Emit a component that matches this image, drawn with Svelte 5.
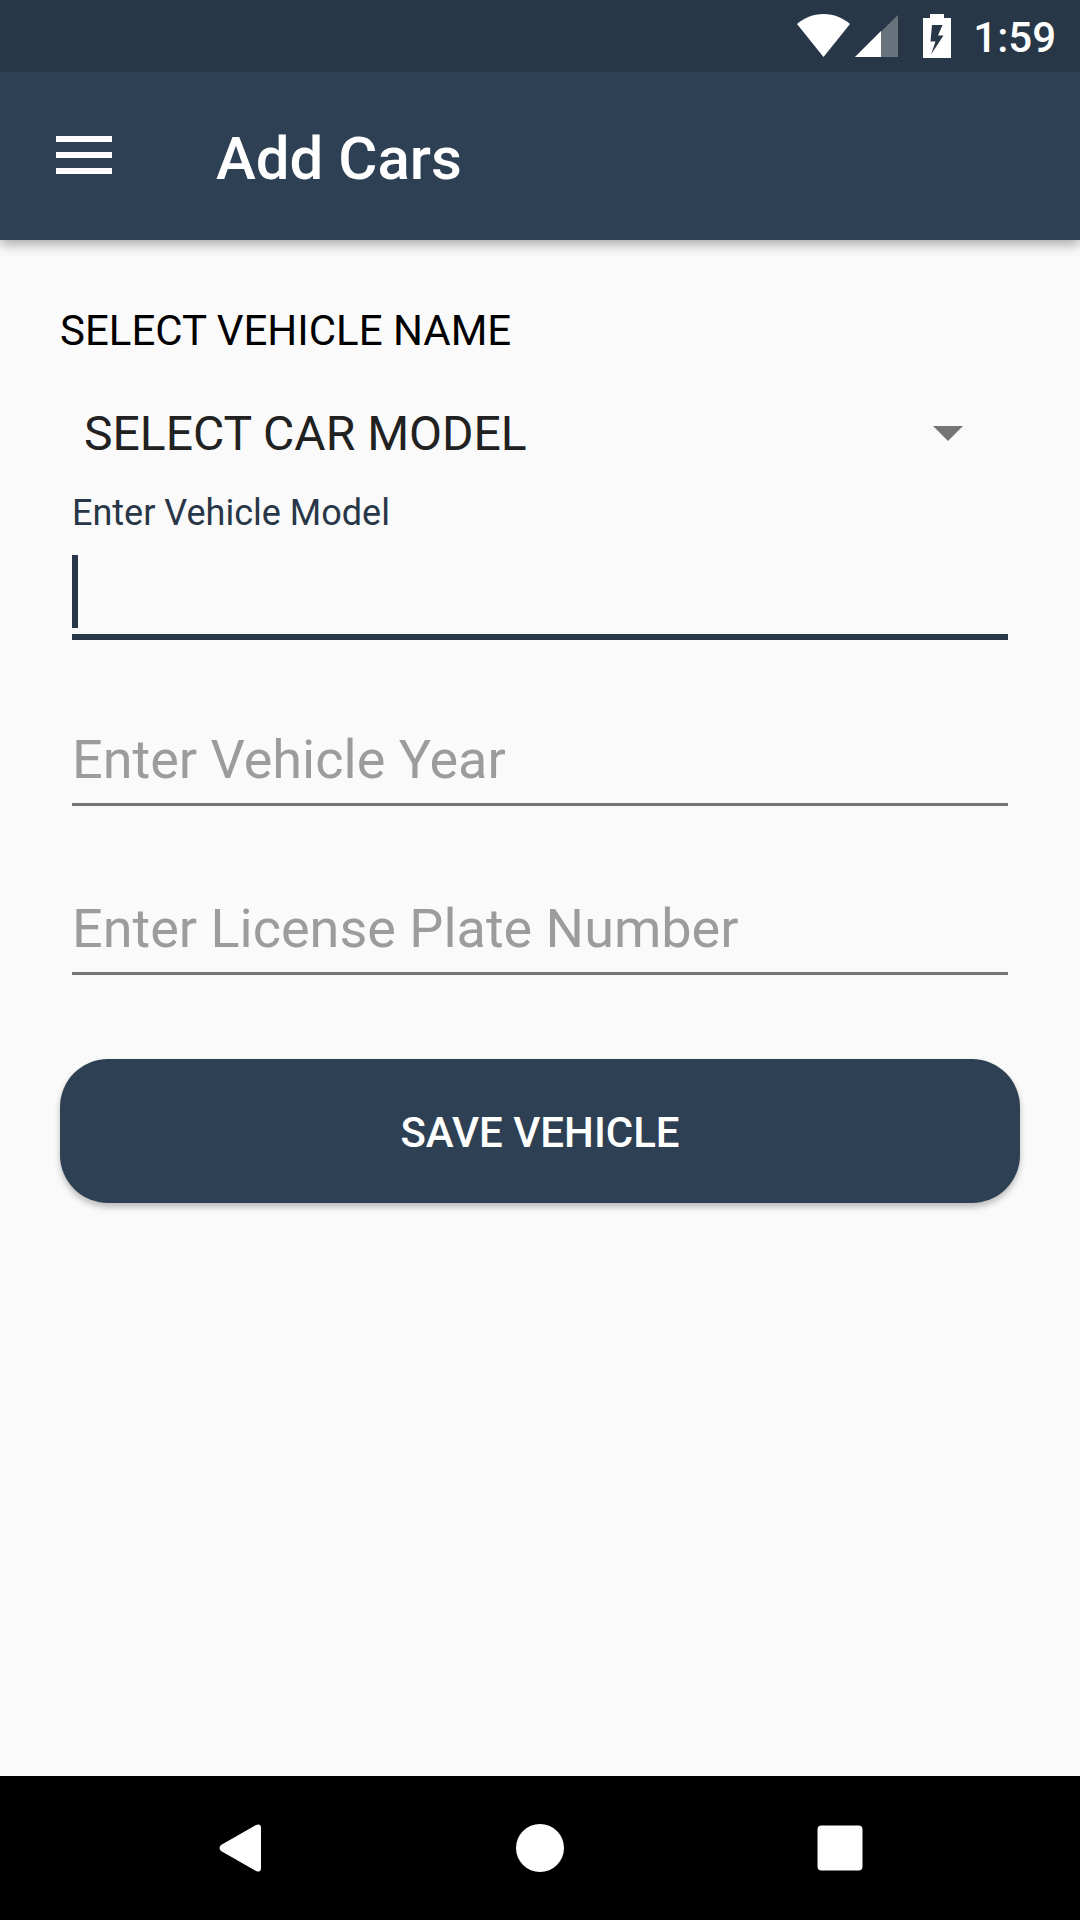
<script lang="ts">
  interface Field {
    id: string;
    label: string;
    value: string;
  }

  let carModel = $state('');
  let active = $state('vehicle-model');
  let fields: Field[] = $state([
    { id: 'vehicle-model', label: 'Enter Vehicle Model', value: '' },
    { id: 'vehicle-year', label: 'Enter Vehicle Year', value: '' },
    { id: 'license-plate', label: 'Enter License Plate Number', value: '' },
  ]);

  function handleSubmit(event: SubmitEvent) {
    event.preventDefault();
  }
</script>

<div class="screen">
  <div class="status-bar">
    <svg class="wifi" width="54" height="44" viewBox="0 0 54 44" aria-hidden="true">
      <path d="M0 10C7 4 16 0 26.500 0S46 4 53 10L26.500 43z" fill="#fff" />
    </svg>
    <svg class="signal" width="44" height="44" viewBox="0 0 44 44" aria-hidden="true">
      <path d="M43 1v42H0z" fill="#fff" fill-opacity="0.3" />
      <path d="M26 17v26H0z" fill="#fff" />
    </svg>
    <svg class="battery" width="28" height="44" viewBox="0 0 28 44" aria-hidden="true">
      <path
        fill="#fff"
        fill-rule="evenodd"
        d="M7 0h14v4h7v40H0V4h7zM9 11L7.500 27.500h5L8 40.500L20.500 21.500H15L19.500 11z"
      />
    </svg>
    <span class="time">1:59</span>
  </div>

  <header class="toolbar">
    <button type="button" class="menu-button" aria-label="Menu">
      <svg width="56" height="40" viewBox="0 0 56 40" fill="#fff" aria-hidden="true">
        <path d="M0 0h56v6H0zM0 16h56v6H0zM0 32h56v6H0z" />
      </svg>
    </button>
    <h1>Add Cars</h1>
  </header>

  <main>
    <form onsubmit={handleSubmit}>
      <label class="select-label" for="car-model">SELECT VEHICLE NAME</label>
      <div class="spinner">
        <select id="car-model" bind:value={carModel}>
          <option value="">SELECT CAR MODEL</option>
        </select>
        <svg width="30" height="15" viewBox="0 0 30 15" aria-hidden="true">
          <path d="M0 0h30L15 15z" fill="#757575" />
        </svg>
      </div>

      <div class="fields">
        {#each fields as field (field.id)}
          <div
            class="field"
            class:active={active === field.id}
            class:floating={active === field.id || field.value !== ''}
          >
            <input
              id={field.id}
              type="text"
              autocomplete="off"
              bind:value={field.value}
              onfocus={() => (active = field.id)}
            />
            <label for={field.id}>{field.label}</label>
            {#if active === field.id && field.value === ''}
              <span class="cursor"></span>
            {/if}
          </div>
        {/each}
      </div>

      <button type="submit" class="save-button">SAVE VEHICLE</button>
    </form>
  </main>

  <nav class="system-nav">
    <button type="button" aria-label="Back">
      <svg width="48" height="48" viewBox="0 0 48 48" fill="#fff" aria-hidden="true">
        <path d="M5 21L40 1Q45 -1 45 4V44Q45 49 40 47L5 27Q2 24 5 21z" />
      </svg>
    </button>
    <button type="button" aria-label="Home">
      <svg width="48" height="48" viewBox="0 0 48 48" fill="#fff" aria-hidden="true">
        <circle cx="24" cy="24" r="24" />
      </svg>
    </button>
    <button type="button" aria-label="Recent apps">
      <svg width="48" height="48" viewBox="0 0 48 48" fill="#fff" aria-hidden="true">
        <rect x="1.5" y="1.5" width="45" height="45" rx="4" />
      </svg>
    </button>
  </nav>
</div>

<style>
  :global(body) {
    background: #fafafa;
  }

  .screen {
    display: flex;
    flex-direction: column;
    min-height: 100vh;
    font-family: Roboto, sans-serif;
    color: #000;
  }

  svg {
    display: block;
  }

  button {
    border: 0;
    padding: 0;
    background: none;
    font: inherit;
    color: #fff;
    cursor: pointer;
  }

  .status-bar {
    position: relative;
    z-index: 1;
    display: flex;
    align-items: center;
    justify-content: flex-end;
    height: 72px;
    padding-right: 24px;
    background: #283747;
    color: #fff;
  }

  .signal {
    margin-left: 4px;
  }

  .battery {
    margin: 0 22px 0 24px;
  }

  .time {
    font-size: 42px;
    font-weight: 500;
    line-height: 48px;
    padding-top: 4px;
  }

  .toolbar {
    display: flex;
    align-items: center;
    gap: 104px;
    height: 168px;
    padding: 0 56px;
    background: #2e4053;
    color: #fff;
    box-shadow: 0 4px 12px rgba(0, 0, 0, 0.35);
  }

  h1 {
    margin: 0;
    padding-top: 6px;
    font-size: 60px;
    font-weight: 500;
    line-height: 72px;
  }

  main {
    flex: 1;
    padding: 66px 60px;
  }

  form {
    display: flex;
    flex-direction: column;
  }

  .select-label {
    font-size: 42px;
    line-height: 50px;
  }

  .spinner {
    display: grid;
    align-items: center;
    margin: 41px 0 20px;
  }

  .spinner select,
  .spinner svg {
    grid-area: 1 / 1;
  }

  .spinner svg {
    justify-self: end;
    margin-right: 57px;
    pointer-events: none;
  }

  select {
    appearance: none;
    width: 100%;
    height: 72px;
    padding: 0 96px 0 24px;
    border: 0;
    background: transparent;
    color: #212121;
    font-family: inherit;
    font-size: 48px;
  }

  .fields {
    display: flex;
    flex-direction: column;
    gap: 15px;
    padding: 0 12px;
  }

  /* label row, gap, input row; the label drops into the input row when idle */
  .field {
    display: grid;
    grid-template-columns: minmax(0, 1fr);
    grid-template-rows: 48px 18px 88px;
  }

  .field input {
    grid-area: 3 / 1;
    align-self: start;
    box-sizing: content-box;
    height: 72px;
    padding: 0 0 10px;
    border: 0;
    border-radius: 0;
    outline: 0;
    background: linear-gradient(#757575, #757575) bottom / 100% 3px no-repeat;
    caret-color: #283747;
    font-family: inherit;
    font-size: 54px;
  }

  .field.active input {
    padding-bottom: 13px;
    background: linear-gradient(#283747, #283747) bottom / 100% 6px no-repeat;
  }

  .field label {
    grid-area: 3 / 1;
    color: #9c9c9c;
    font-size: 54px;
    line-height: 72px;
    pointer-events: none;
  }

  .field.floating label {
    grid-row: 1;
    color: #757575;
    font-size: 36px;
    line-height: 48px;
  }

  .field.active label {
    color: #283747;
  }

  .cursor {
    grid-area: 3 / 1;
    width: 6px;
    height: 73px;
    background: #283747;
    pointer-events: none;
  }

  .save-button {
    height: 144px;
    margin-top: 78px;
    padding-top: 2px;
    border-radius: 48px;
    background: #2e4053;
    box-shadow: 0 4px 6px rgba(0, 0, 0, 0.25);
    font-size: 42px;
    font-weight: 500;
  }

  .system-nav {
    display: flex;
    align-items: center;
    justify-content: center;
    height: 144px;
    background: #000;
  }

  .system-nav button {
    display: flex;
    align-items: center;
    justify-content: center;
    flex: 0 1 300px;
    height: 100%;
  }
</style>
